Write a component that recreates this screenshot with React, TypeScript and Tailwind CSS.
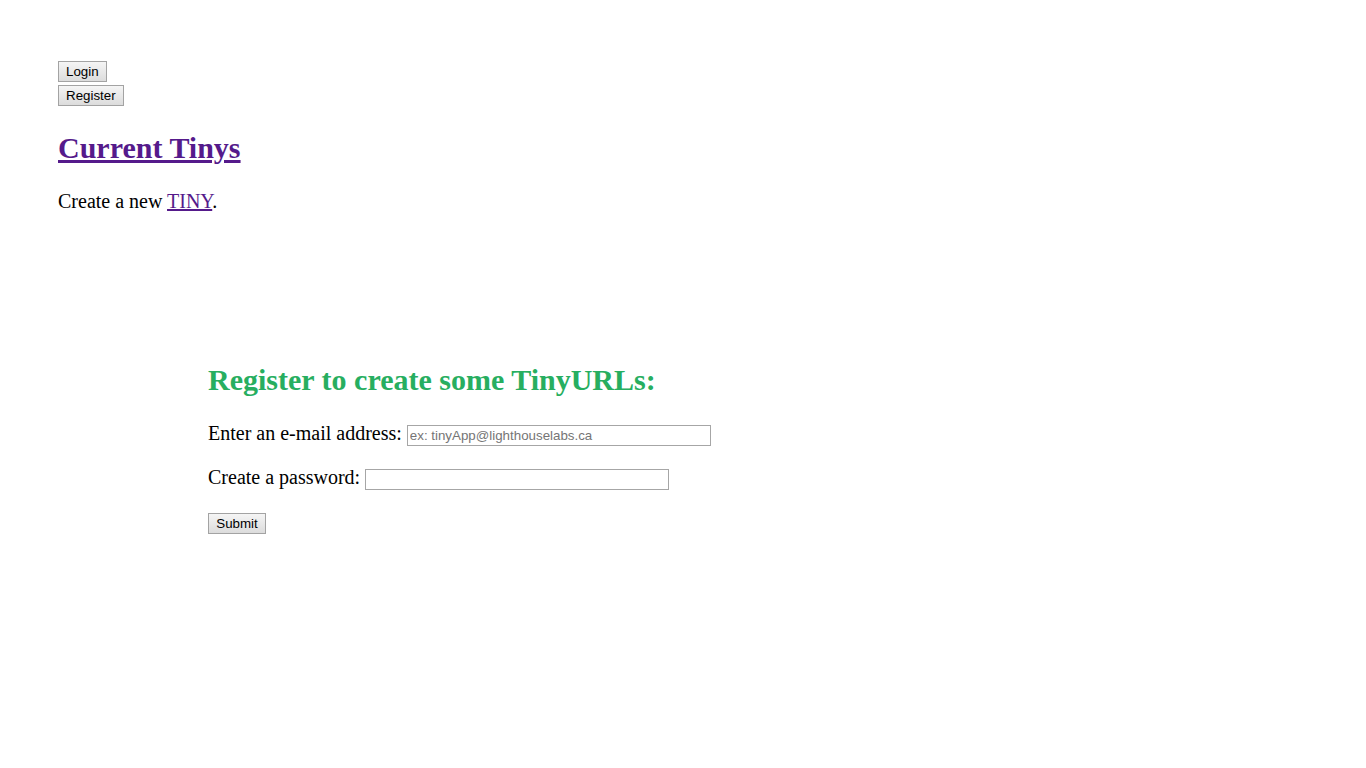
import React from "react";

const btn =
  "block h-[21px] px-[7px] border border-[#a3a3a3] bg-gradient-to-b from-[#f5f5f5] to-[#dcdcdc] text-[13.33px] leading-[15px] text-black font-['Liberation_Sans',Arial,sans-serif]";

const field =
  "h-[21px] w-[304px] border border-[#a6a6a6] bg-white px-[2px] text-[13.33px] text-black font-['Liberation_Sans',Arial,sans-serif] placeholder:text-[#757575] outline-none";

export default function App() {
  return (
    <div className="min-h-screen bg-white pl-[58px] pt-[61px] font-['Liberation_Serif','Times_New_Roman',serif] text-black">
      <form>
        <button type="button" className={btn}>
          Login
        </button>
      </form>
      <form className="mt-[3px]">
        <button type="button" className={btn}>
          Register
        </button>
      </form>

      <h1 className="mt-[25px] text-[30px] font-bold leading-[34px]">
        <a href="#" className="text-[#551a8b] underline">
          Current Tinys
        </a>
      </h1>
      <p className="mt-[25px] text-[20px] leading-[23px]">
        Create a new{" "}
        <a href="#" className="text-[#551a8b] underline">
          TINY
        </a>
        .
      </p>

      <div className="ml-[150px] mt-[150px]">
        <h2 className="text-[30px] font-bold leading-[34px] text-[#27ae60]">Register to create some TinyURLs:</h2>
        <form>
          <div className="mt-[25px] flex items-start gap-[5px] text-[20px] leading-[23px]">
            <label htmlFor="email">Enter an e-mail address:</label>
            <input id="email" type="email" placeholder="ex: tinyApp@lighthouselabs.ca" className={`${field} mt-[3px]`} />
          </div>
          <div className="mt-[20px] flex items-start gap-[5px] text-[20px] leading-[23px]">
            <label htmlFor="password">Create a password:</label>
            <input id="password" type="password" className={`${field} mt-[3px]`} />
          </div>
          <div className="mt-[20px] flex h-[24px] items-start">
            <button type="submit" className={`${btn} mt-[3px] w-[58px]`}>
              Submit
            </button>
          </div>
        </form>
      </div>
    </div>
  );
}
